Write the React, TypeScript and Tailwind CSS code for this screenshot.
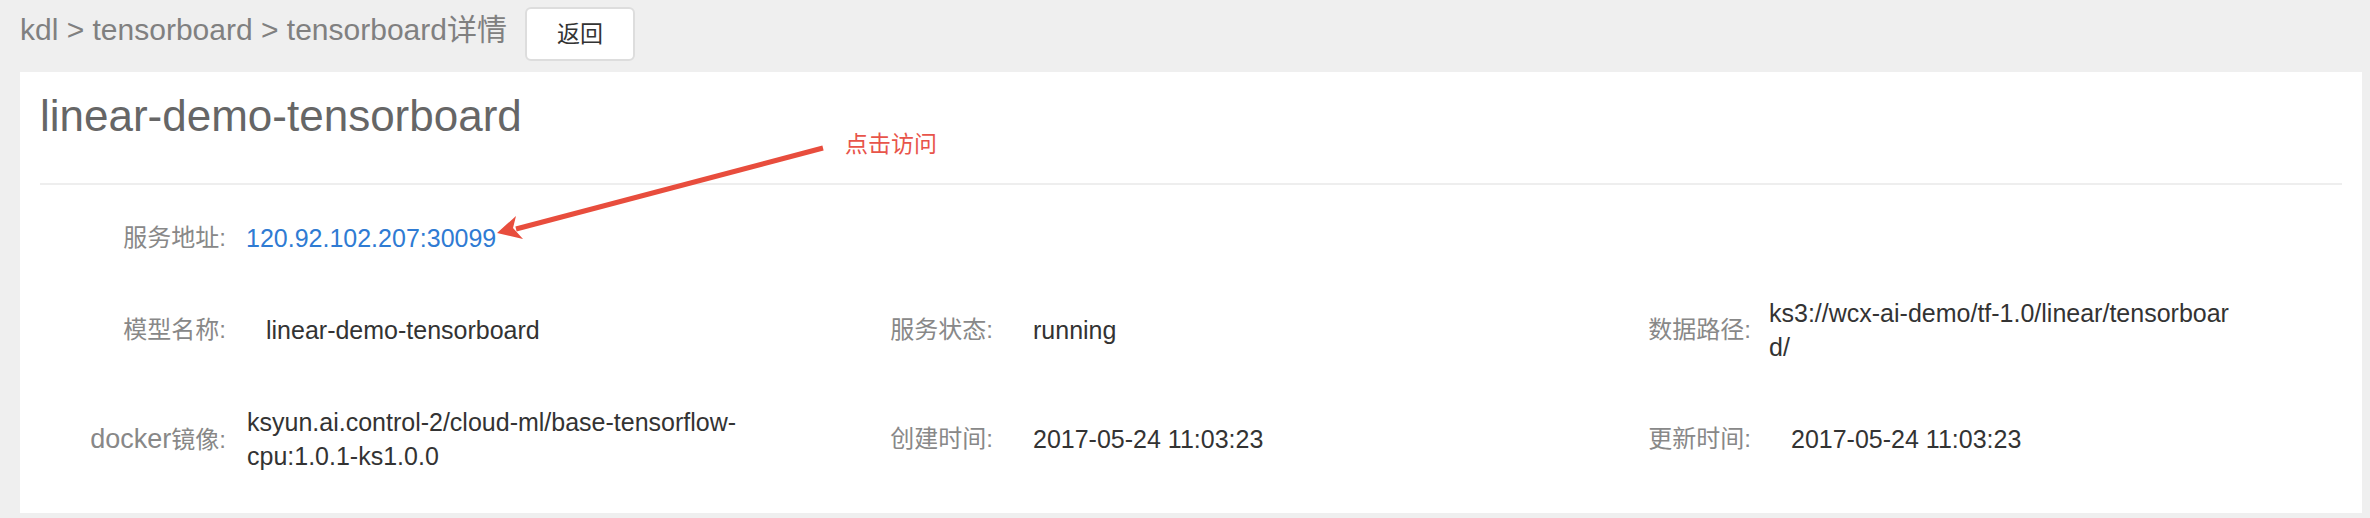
import React from "react";

const FONT = { fontFamily: '"Liberation Sans", "Noto Sans CJK SC", sans-serif' };

function Label({ children }: { children: React.ReactNode }) {
  return (
    <div className="w-[186px] shrink-0 text-right text-[24px] leading-[34px] text-[#888888]">
      {children}
    </div>
  );
}

function Cell({
  label,
  children,
  indent = "ml-[40px]",
  color = "text-[#333333]",
}: {
  label: React.ReactNode;
  children: React.ReactNode;
  indent?: string;
  color?: string;
}) {
  return (
    <div className="flex items-center">
      <Label>{label}</Label>
      <div className={`${indent} ${color} text-[25px] leading-[34px] whitespace-nowrap`}>{children}</div>
    </div>
  );
}

export default function App() {
  return (
    <div className="relative min-h-screen w-full bg-[#efefef]" style={FONT}>
      {/* breadcrumb */}
      <div className="flex items-center pt-[7px] pb-[11px] pl-[20px]">
        <div className="pb-[8px] text-[30px] leading-[46px] text-[#808080]">
          kdl &gt; tensorboard &gt; tensorboard详情
        </div>
        <button className="ml-[18px] h-[54px] w-[110px] rounded-[6px] border-2 border-[#dddddd] bg-white text-[23px] text-[#333333]">
          返回
        </button>
      </div>

      {/* card */}
      <div className="ml-[20px] w-[2342px] bg-white px-[20px] pt-[22px] pb-[40px]">
        <div className="text-[44px] leading-[44px] text-[#666666]">linear-demo-tensorboard</div>
        <div className="mt-[45px] h-[2px] bg-[#eeeeee]" />

        <div className="mt-[36px] grid grid-cols-[767px_758px_1fr] gap-y-[41px]">
          <Cell label="服务地址:" indent="ml-[20px]" color="text-[#2f7bd3]">
            120.92.102.207:30099
          </Cell>
          <div />
          <div />

          <Cell label="模型名称:">linear-demo-tensorboard</Cell>
          <Cell label="服务状态:">running</Cell>
          <Cell label="数据路径:" indent="ml-[18px]">
            <div>ks3://wcx-ai-demo/tf-1.0/linear/tensorboar</div>
            <div>d/</div>
          </Cell>

          <Cell
            label={
              <>
                <span className="text-[27px]">docker</span>镜像:
              </>
            }
            indent="ml-[21px]"
          >
            <div>ksyun.ai.control-2/cloud-ml/base-tensorflow-</div>
            <div>cpu:1.0.1-ks1.0.0</div>
          </Cell>
          <Cell label="创建时间:">2017-05-24 11:03:23</Cell>
          <Cell label="更新时间:">2017-05-24 11:03:23</Cell>
        </div>
      </div>

      {/* annotation overlay */}
      <svg
        className="pointer-events-none absolute left-0 top-0"
        width="2370"
        height="518"
        viewBox="0 0 2370 518"
      >
        <line x1="823" y1="148" x2="516" y2="229" stroke="#e84d3d" strokeWidth="5" />
        <polygon points="497,233 516,216 513,228 523,239" fill="#e84d3d" />
      </svg>
      <div className="pointer-events-none absolute left-[845px] top-[128px] text-[23px] leading-[32px] text-[#e8544a]">
        点击访问
      </div>
    </div>
  );
}
